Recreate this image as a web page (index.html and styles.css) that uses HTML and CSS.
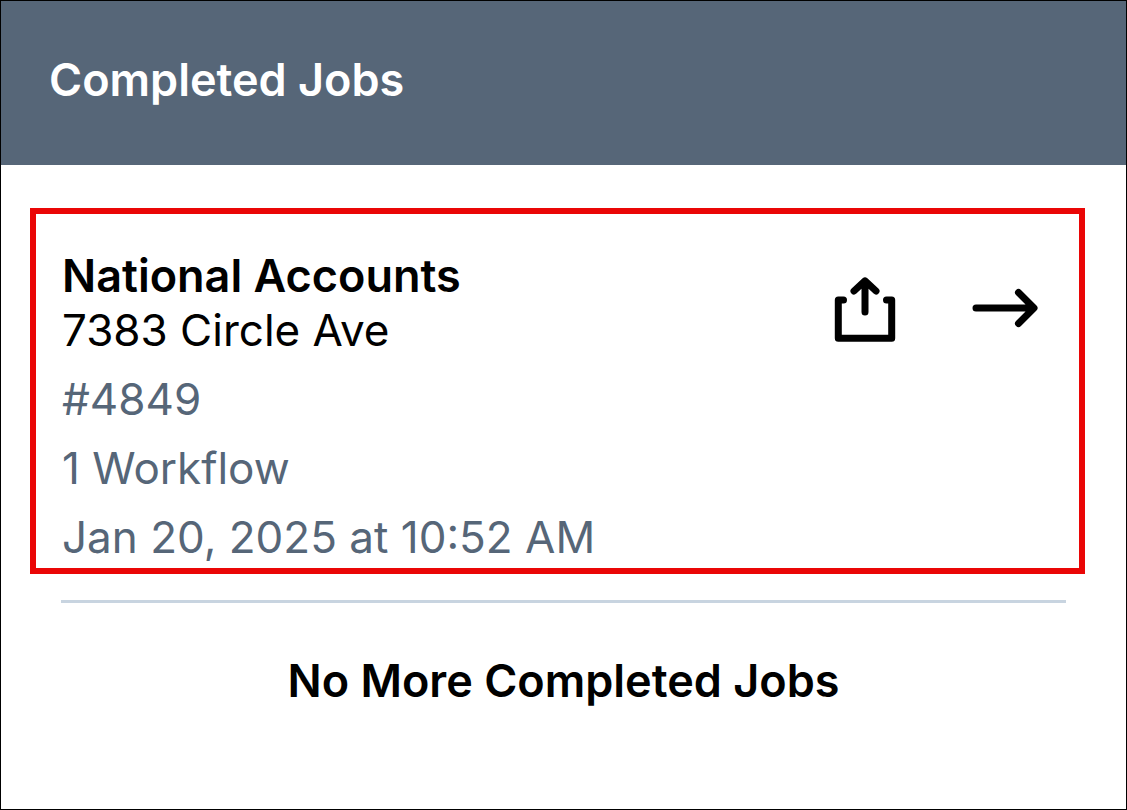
FILE: index.html
```html
<!DOCTYPE html>
<html lang="en">
<head>
  <meta charset="utf-8">
  <title>Completed Jobs</title>
  <meta name="viewport" content="width=device-width, initial-scale=1">
  <link rel="stylesheet" href="styles.css">
</head>

<body>
  <header class="topbar">
    <h1>Completed Jobs</h1>
  </header>
  <main class="content">
    <div class="job selected">
      <div class="info">
        <h2>National Accounts</h2>
        <p class="address">7383 Circle Ave</p>
        <p class="detail">#4849</p>
        <p class="detail">1 Workflow</p>
        <p class="detail">Jan 20, 2025 at 10:52 AM</p>
      </div>
      <div class="actions">
        <button type="button" class="button" aria-label="Share job">
          <svg width="66" height="66" viewBox="0 0 66 66">
            <path d="M11.5 23H6.3V61.3H59.7V23H54.5M33 35V4M22 14L33 3.8L44 14" />
          </svg>
        </button>
        <button type="button" class="button" aria-label="Open job">
          <svg width="66" height="66" viewBox="0 0 66 66">
            <path d="M4 31H61M46.5 15.5L62 31L46.5 46.5" />
          </svg>
        </button>
      </div>
    </div>
    <hr class="divider">
    <p class="end">No More Completed Jobs</p>
  </main>
</body>

</html>
```
FILE: styles.css
```css
* {
  box-sizing: border-box;
}
body {
  margin: 0;
  min-height: 100vh;
  border: 1px solid #000;
  background-color: #fff;
  color: #000;
  font-family: Inter, "Liberation Sans", sans-serif;
  font-size: 44px;
  line-height: 54px;
}
h1, h2, p {
  margin: 0;
}
h1, h2, .end {
  font-size: 45px;
  font-weight: 600;
}
.topbar {
  padding: 52px 48px 58px;
  background-color: #566678;
  color: #fff;
}
.content {
  padding: 43px 0 48px;
}
.job {
  display: flex;
  justify-content: space-between;
  align-items: flex-start;
  margin: 0 41px 0 29px;
  padding: 35px 41px 4px 26px;
  border: 6px solid transparent;
}
.selected {
  border-color: #ea0606;
}
.detail {
  margin-top: 15px;
  color: #566678;
}
.actions {
  display: flex;
  gap: 74px;
  padding-top: 28px;
}
.button {
  display: block;
  padding: 0;
  border: none;
  background: none;
  cursor: pointer;
}
.button svg {
  display: block;
  fill: none;
  stroke: #000;
  stroke-width: 7;
  stroke-linecap: round;
  stroke-linejoin: round;
}
.divider {
  height: 3px;
  margin: 26px 60px 51px;
  border: none;
  background-color: #c8d4e0;
}
.end {
  text-align: center;
}
```
